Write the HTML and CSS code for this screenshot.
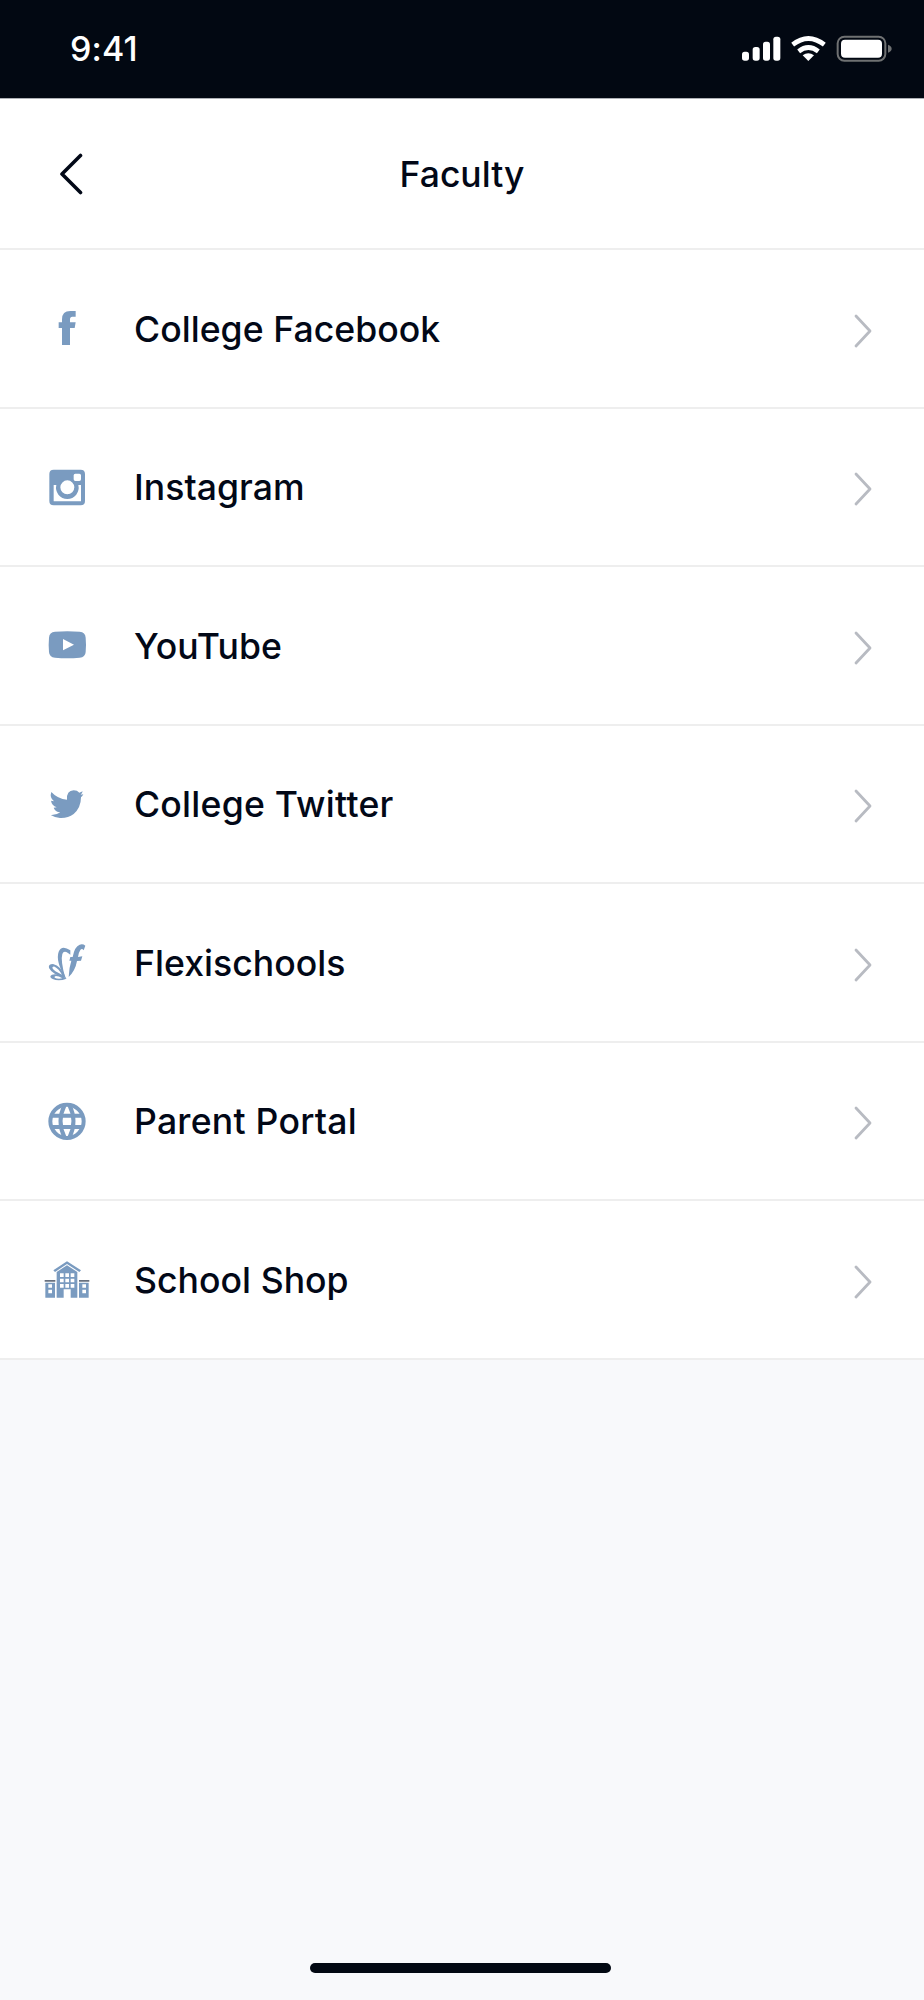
FILE: index.html
```html
<!DOCTYPE html>
<html lang="en">
<head>
<meta charset="utf-8">
<title>Faculty</title>
<link rel="stylesheet" href="styles.css">
</head>
<body>
<div class="screen">
  <div class="status">
    <span class="time">9:41</span>
    <svg class="indicators" viewBox="0 0 480 90">
      <g fill="#fff">
        <rect x="6" y="56" width="21" height="27" rx="8"/>
        <rect x="38" y="42" width="21" height="41" rx="8"/>
        <rect x="69" y="26" width="21" height="57" rx="8"/>
        <rect x="100" y="11" width="21" height="72" rx="8"/>
        <path d="M205 84 L188 67 Q205 54 222 67Z"/>
      </g>
      <g fill="none" stroke="#fff" stroke-width="14">
        <path d="M158 35 Q205 -2 253 35"/>
        <path d="M176 55 Q205 32 235 55"/>
      </g>
      <rect x="293" y="11" width="143" height="72" rx="20" fill="none" stroke="#6f7172" stroke-width="6"/>
      <rect x="303" y="20" width="123" height="54" rx="12" fill="#fff"/>
      <path fill="#6f7172" d="M444 35 Q455 39 455 47 Q455 55 444 59Z"/>
    </svg>
  </div>
  <header class="header">
    <svg class="back" viewBox="0 0 24 42"><path d="M21.5 2.5 L3 21 L21.5 39.5"/></svg>
    <h1 class="title">Faculty</h1>
  </header>
  <main class="list">
    <a class="row">
      <svg class="icon" viewBox="-30 -6 240 240"><path d="M66 165V114H56V97H66V88Q66 63 91 63H107V80H97Q90 80 90 88V97H107L104 114H90V165Z"/></svg>
      <span class="label">College Facebook</span>
      <svg class="chevron" viewBox="0 0 18 34"><path d="M2 2 L16 17 L2 32"/></svg>
    </a>
    <a class="row">
      <svg class="icon" viewBox="0 -11 240 240"><path fill-rule="evenodd" d="M71 57H152Q165 57 165 70V151Q165 164 152 164H71Q58 164 58 151V70Q58 57 71 57ZM136 69Q131 69 131 74V86Q131 91 136 91H148Q153 91 153 86V74Q153 69 148 69ZM71 103V152H153V103H145A34 34 0 1 1 79 103ZM112 89A21 21 0 1 0 112 131A21 21 0 1 0 112 89Z"/></svg>
      <span class="label">Instagram</span>
      <svg class="chevron" viewBox="0 0 18 34"><path d="M2 2 L16 17 L2 32"/></svg>
    </a>
    <a class="row">
      <svg class="icon" viewBox="0 0 240 240"><path fill-rule="evenodd" d="M75 80Q112 78 149 80Q166 81 167 98Q169 119 167 141Q166 157 149 158Q112 161 75 158Q58 157 57 141Q55 119 57 98Q58 81 75 80ZM99 102V136L132 119Z"/></svg>
      <span class="label">YouTube</span>
      <svg class="chevron" viewBox="0 0 18 34"><path d="M2 2 L16 17 L2 32"/></svg>
    </a>
    <a class="row">
      <svg class="icon" viewBox="0 -5 240 240"><path d="M64 79Q83 100 111 102Q109 75 131 74Q142 74 148 81L158 77Q157 83 152 87L160 86Q157 92 153 95Q153 126 131 145Q114 158 90 157Q75 156 62 148Q79 149 91 140Q75 138 71 126L80 125Q65 119 63 105L72 107Q58 96 64 79Z"/></svg>
      <span class="label spaced">College Twitter</span>
      <svg class="chevron" viewBox="0 0 18 34"><path d="M2 2 L16 17 L2 32"/></svg>
    </a>
    <a class="row">
      <svg class="icon" viewBox="0 -10 240 240">
        <path d="M116 155Q117 127 124 106H118L121 95H128Q134 63 149 58Q159 55 166 61L161 75Q156 68 151 74Q146 81 144 95L157 93L153 106L141 107Q136 136 116 155Z"/>
        <path d="M106 158Q76 107 86 79Q95 58 121 75L121 88L114 83Q101 74 97 86Q91 105 106 158Z"/>
        <path fill-rule="evenodd" d="M108 159Q93 120 69 116Q54 116 57 128Q66 147 108 159ZM96 148Q71 137 67 128Q67 122 74 124Q85 129 96 148Z"/>
        <path fill-rule="evenodd" d="M110 160Q82 142 66 148Q55 154 68 161Q86 169 110 160ZM97 159Q83 162 74 157Q72 153 78 152Q86 152 97 159Z"/>
      </svg>
      <span class="label">Flexischools</span>
      <svg class="chevron" viewBox="0 0 18 34"><path d="M2 2 L16 17 L2 32"/></svg>
    </a>
    <a class="row">
      <svg class="icon globe" viewBox="0 0 240 240"><circle cx="111" cy="121" r="50"/><path d="M63 104H159M63 138H159M104 72Q79 121 104 170M118 72Q143 121 118 170"/></svg>
      <span class="label spaced">Parent Portal</span>
      <svg class="chevron" viewBox="0 0 18 34"><path d="M2 2 L16 17 L2 32"/></svg>
    </a>
    <a class="row">
      <svg class="icon" viewBox="0 -5 240 240">
        <path d="M70 89L111 62L153 89L148 94L111 70L75 94Z"/>
        <path fill-rule="evenodd" d="M80 94L111 74L142 94V171H122V146H101V171H80ZM90 98V109H101V98ZM106 98V109H117V98ZM122 98V109H133V98ZM90 114V125H101V114ZM106 114V125H117V114ZM122 114V125H133V114ZM90 130V141H101V130ZM106 130V141H117V130ZM122 130V141H133V130Z"/>
        <path fill-rule="evenodd" d="M46 126H75V171H46ZM55 131V141H66V131ZM55 147V158H66V147ZM147 126H176V171H147ZM157 131V141H168V131ZM157 147V158H168V147Z"/>
        <path class="roof" d="M44 118H76V123H44ZM147 118H178V123H147Z"/>
      </svg>
      <span class="label">School Shop</span>
      <svg class="chevron" viewBox="0 0 18 34"><path d="M2 2 L16 17 L2 32"/></svg>
    </a>
  </main>
  <div class="home"></div>
</div>
</body>
</html>
```
FILE: styles.css
```css
* { box-sizing: border-box; }
body { margin: 0; background: #f8f9fb; font-family: Inter, sans-serif; color: #020817; }
.screen { display: flex; flex-direction: column; width: 924px; height: 2000px; overflow: hidden; }
.status { display: flex; justify-content: space-between; align-items: flex-start; height: 99px; padding: 33px 24px 0 70px; background: #020812; border-bottom: 1px solid #aeb0b5; color: #fff; }
.time { font-size: 34px; line-height: 32px; font-weight: 550; letter-spacing: 0.1px; }
.indicators { width: 160px; height: 30px; }
.header { display: grid; grid-template-columns: 1fr auto 1fr; align-items: center; height: 151px; padding: 0 59px; background: #fff; border-bottom: 2px solid #eee; }
.back { width: 24px; height: 42px; fill: none; stroke: #020817; stroke-width: 3.6; stroke-linecap: round; stroke-linejoin: round; }
.title { margin: 0; padding-top: 3px; font-size: 35.5px; line-height: 44px; font-weight: 500; }
.list { background: #fff; }
.row { display: flex; align-items: center; height: 158.5px; padding: 0 52px 0 30px; border-bottom: 2px solid #eee; }
.icon { width: 80px; height: 80px; margin-right: 24px; fill: #7a9bc0; }
.globe { fill: none; stroke: #7a9bc0; stroke-width: 12; }
.roof { fill: #68717f; }
.label { flex: 1; padding-top: 3px; font-size: 35.6px; line-height: 44px; font-weight: 500; letter-spacing: 0.04px; }
.spaced { letter-spacing: 0.25px; }
.chevron { width: 18px; height: 34px; margin-top: 5px; fill: none; stroke: #b8bbc2; stroke-width: 2.8; stroke-linecap: round; stroke-linejoin: round; }
.home { width: 301px; height: 10px; margin: auto auto 27px 310px; border-radius: 5px; background: #020812; }
```
